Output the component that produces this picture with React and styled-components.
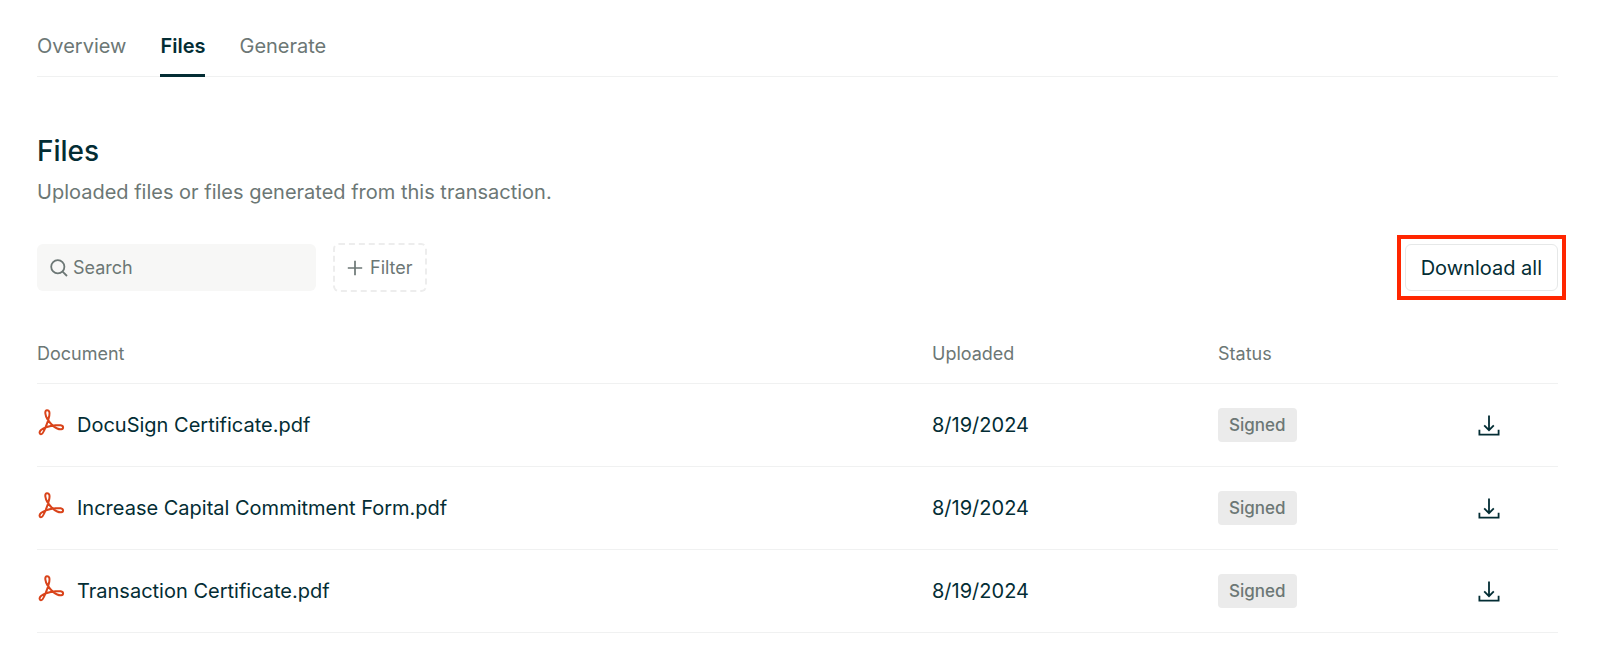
import React, { useState } from 'react';
import styled, { createGlobalStyle } from 'styled-components';

const GlobalStyle = createGlobalStyle`
    * {
        box-sizing: border-box;
    }
    body {
        margin: 0;
        background: #fff;
        color: #032d34;
        font-family: Inter, "Liberation Sans", sans-serif;
        font-size: 20px;
        line-height: 24px;
    }
    button, input {
        font: inherit;
    }
`;

const Page = styled.div`
    padding: 34px 42px 19px 37px;
`;

const Tabs = styled.nav`
    display: flex;
    gap: 34px;
    border-bottom: 1px solid #f0f1f1;
`;

const Tab = styled.a`
    margin-bottom: -1px;
    padding-bottom: 16px;
    border-bottom: 3px solid ${({ $active }) => ($active ? '#032d34' : 'transparent')};
    color: ${({ $active }) => ($active ? '#032d34' : '#6c7775')};
    font-weight: ${({ $active }) => ($active ? 600 : 400)};
    text-decoration: none;
`;

const Title = styled.h1`
    margin: 56px 0 0;
    font-size: 28px;
    line-height: 36px;
    font-weight: 500;
`;

const Subtitle = styled.p`
    margin: 11px 0 0;
    color: #6c7775;
`;

const Toolbar = styled.div`
    display: flex;
    align-items: center;
    margin-top: 39px;
`;

const SearchBox = styled.label`
    display: flex;
    align-items: center;
    gap: 5px;
    width: 279px;
    height: 47px;
    padding: 0 13px;
    border-radius: 6px;
    background: #f7f7f6;
    color: #6c7775;
`;

const SearchInput = styled.input`
    flex: 1;
    min-width: 0;
    padding: 0;
    border: 0;
    outline: 0;
    background: transparent;
    color: #032d34;
    font-size: 18px;

    &::placeholder {
        color: #6c7775;
        opacity: 1;
    }
`;

const FilterButton = styled.button`
    display: flex;
    align-items: center;
    gap: 7px;
    height: 49px;
    margin-left: 17px;
    padding: 0 12px;
    border: 2px dashed #ededed;
    border-radius: 6px;
    background: #fff;
    color: #6c7775;
    font-size: 18px;
`;

const DownloadAll = styled.div`
    position: relative;
    margin-left: auto;

    &::after {
        content: '';
        position: absolute;
        inset: -9px -8px;
        border: 4px solid #ff2600;
        pointer-events: none;
    }
`;

const DownloadAllButton = styled.button`
    height: 47px;
    padding: 0 15px;
    border: 1px solid #e6e8e8;
    border-radius: 6px;
    background: #fff;
    color: #032d34;
`;

const Table = styled.table`
    width: 100%;
    margin-top: 33px;
    border-collapse: separate;
    border-spacing: 0;
    table-layout: fixed;
`;

const HeadCell = styled.th`
    width: ${({ $width }) => $width};
    height: 59px;
    padding: 0;
    border-bottom: 1px solid #f0f1f1;
    color: #6c7775;
    font-size: 18px;
    font-weight: 400;
    text-align: left;
`;

const Cell = styled.td`
    height: 83px;
    padding: 0;
    border-bottom: 1px solid #f0f1f1;
`;

const FileName = styled.div`
    display: flex;
    align-items: center;
    gap: 12px;
`;

const Badge = styled.span`
    display: inline-block;
    padding: 5px 11px;
    border-radius: 4px;
    background: #ebebeb;
    color: #6c7775;
    font-size: 17px;
    font-weight: 500;
`;

const IconButton = styled.button`
    display: block;
    padding: 0;
    border: 0;
    background: transparent;
    color: #032d34;

    svg {
        display: block;
    }
`;

const SearchIcon = () => (
    <svg width="18" height="18" viewBox="0 0 18 18" fill="none" stroke="currentColor" strokeWidth="1.8">
        <circle cx="7.8" cy="7.8" r="6.6" />
        <path d="M12.6 12.6l4.4 4.4" />
    </svg>
);

const PlusIcon = () => (
    <svg width="16" height="16" viewBox="0 0 16 16" fill="none" stroke="currentColor" strokeWidth="1.7">
        <path d="M8 .8v14.4M.8 8h14.4" />
    </svg>
);

const PdfIcon = () => (
    <svg width="28" height="36" viewBox="1 0 28 36" fill="none" stroke="#d9431a" strokeWidth="2" strokeLinejoin="round">
        <path d="M10.8 3.2C13.4 2.9 13.9 5.7 13.3 8.7C12.6 12.5 10.9 17.2 9.2 21.2C7.8 24.6 6.4 27.5 4.9 27.3C3 27 3.200 24.6 5 23C8 20.6 14.5 18.9 19.5 18.3C23.300 17.9 27.1 18.1 27.1 20.4C27.1 22.6 24 22.7 21.2 21.5C17.6 20 13.9 15.9 11.4 12.1C9.5 9.2 8.1 3.5 10.8 3.2Z" />
    </svg>
);

const DownloadIcon = () => (
    <svg width="22" height="21" viewBox="0 0 22 21" fill="none" stroke="currentColor" strokeWidth="1.8">
        <path d="M11 .5v14.5M6.2 10.4l4.8 4.8 4.8-4.8M1.4 14.8v4.9h19.2v-4.9" />
    </svg>
);

const tabs = ['Overview', 'Files', 'Generate'];

const files = [
    { name: 'DocuSign Certificate.pdf', uploaded: '8/19/2024', status: 'Signed' },
    { name: 'Increase Capital Commitment Form.pdf', uploaded: '8/19/2024', status: 'Signed' },
    { name: 'Transaction Certificate.pdf', uploaded: '8/19/2024', status: 'Signed' },
];

const App = () => {
    const [search, setSearch] = useState('');
    const shown = files.filter((file) => file.name.toLowerCase().includes(search.toLowerCase()));

    return (
        <Page>
            <GlobalStyle />
            <Tabs>
                {tabs.map((tab) => (
                    <Tab key={tab} href={`#${tab.toLowerCase()}`} $active={tab === 'Files'}>{tab}</Tab>
                ))}
            </Tabs>
            <Title>Files</Title>
            <Subtitle>Uploaded files or files generated from this transaction.</Subtitle>
            <Toolbar>
                <SearchBox>
                    <SearchIcon />
                    <SearchInput
                        aria-label="Search"
                        placeholder="Search"
                        value={search}
                        onChange={(e) => setSearch(e.target.value)} />
                </SearchBox>
                <FilterButton type="button">
                    <PlusIcon />
                    Filter
                </FilterButton>
                <DownloadAll>
                    <DownloadAllButton type="button">Download all</DownloadAllButton>
                </DownloadAll>
            </Toolbar>
            <Table>
                <thead>
                    <tr>
                        <HeadCell>Document</HeadCell>
                        <HeadCell $width="286px">Uploaded</HeadCell>
                        <HeadCell $width="260px">Status</HeadCell>
                        <HeadCell $width="80px" aria-label="Download" />
                    </tr>
                </thead>
                <tbody>
                    {shown.map((file) => (
                        <tr key={file.name}>
                            <Cell>
                                <FileName>
                                    <PdfIcon />
                                    {file.name}
                                </FileName>
                            </Cell>
                            <Cell>{file.uploaded}</Cell>
                            <Cell><Badge>{file.status}</Badge></Cell>
                            <Cell>
                                <IconButton type="button" aria-label={`Download ${file.name}`}>
                                    <DownloadIcon />
                                </IconButton>
                            </Cell>
                        </tr>
                    ))}
                </tbody>
            </Table>
        </Page>
    );
};

export default App;
